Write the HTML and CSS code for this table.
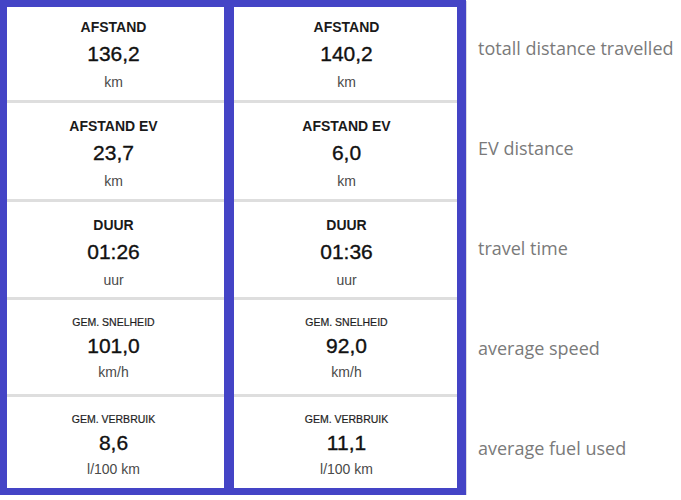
FILE: index.html
```html
<!DOCTYPE html>
<html>
<head>
<meta charset="utf-8">
<link rel="stylesheet" href="styles.css">
</head>
<body>
<div class="page">
  <div class="panel">
    <div class="col col-a">
      <div class="cell first"><div class="label">AFSTAND</div><div class="value">136,2</div><div class="unit">km</div></div>
      <div class="cell"><div class="label">AFSTAND EV</div><div class="value">23,7</div><div class="unit">km</div></div>
      <div class="cell"><div class="label">DUUR</div><div class="value">01:26</div><div class="unit">uur</div></div>
      <div class="cell small"><div class="label">GEM. SNELHEID</div><div class="value">101,0</div><div class="unit">km/h</div></div>
      <div class="cell small"><div class="label">GEM. VERBRUIK</div><div class="value">8,6</div><div class="unit">l/100 km</div></div>
    </div>
    <div class="col col-b">
      <div class="cell first"><div class="label">AFSTAND</div><div class="value">140,2</div><div class="unit">km</div></div>
      <div class="cell"><div class="label">AFSTAND EV</div><div class="value">6,0</div><div class="unit">km</div></div>
      <div class="cell"><div class="label">DUUR</div><div class="value">01:36</div><div class="unit">uur</div></div>
      <div class="cell small"><div class="label">GEM. SNELHEID</div><div class="value">92,0</div><div class="unit">km/h</div></div>
      <div class="cell small"><div class="label">GEM. VERBRUIK</div><div class="value">11,1</div><div class="unit">l/100 km</div></div>
    </div>
  </div>
  <div class="notes">
    <div class="note">totall distance travelled</div>
    <div class="note">EV distance</div>
    <div class="note">travel time</div>
    <div class="note">average speed</div>
    <div class="note">average fuel used</div>
  </div>
</div>
</body>
</html>
```
FILE: styles.css
```css
body {
  margin: 0;
  background: #ffffff;
  font-family: "Liberation Sans", Arial, sans-serif;
}

.page {
  display: flex;
  align-items: flex-start;
}

.panel {
  display: flex;
  gap: 10px;
  background: #4444c6;
  padding: 7px 9px 7px 7px;
  box-shadow: 1px 1px 0 #d9d9e6;
}

.col {
  display: grid;
  grid-template-rows: 93px 96px 95px 94px 91px;
  row-gap: 3px;
  background: #dedede;
  overflow: hidden;
}

.col-a {
  width: 217px;
}

.col-a .cell {
  padding-right: 4px;
}

.col-b {
  width: 223px;
}

.col-b .cell {
  padding-left: 2px;
}

.cell {
  background: #ffffff;
  display: flex;
  flex-direction: column;
  align-items: center;
  padding-top: 13px;
  box-sizing: border-box;
}

.cell.first {
  padding-top: 10px;
}

.label {
  font-size: 14px;
  line-height: 20px;
  font-weight: 700;
  color: #1a1a1a;
}

.value {
  font-size: 21px;
  line-height: 28px;
  color: #111111;
  margin-top: 3px;
  -webkit-text-stroke: 0.35px #111111;
}

.unit {
  font-size: 14px;
  line-height: 18px;
  color: #4a4a4a;
  margin-top: 5px;
}

.small .label {
  font-size: 10.5px;
  line-height: 18px;
  font-weight: 400;
  color: #1e1e1e;
  -webkit-text-stroke: 0.2px #1e1e1e;
}

.small .value {
  margin-top: 1px;
}

.small .unit {
  margin-top: 3px;
}

.notes {
  display: grid;
  grid-template-rows: repeat(4, 100px) auto;
  padding-top: 36px;
  margin-left: 12px;
  font-family: "Open Sans", "Liberation Sans", sans-serif;
  font-size: 18px;
  line-height: 24px;
  color: #7a7a7a;
}
```
